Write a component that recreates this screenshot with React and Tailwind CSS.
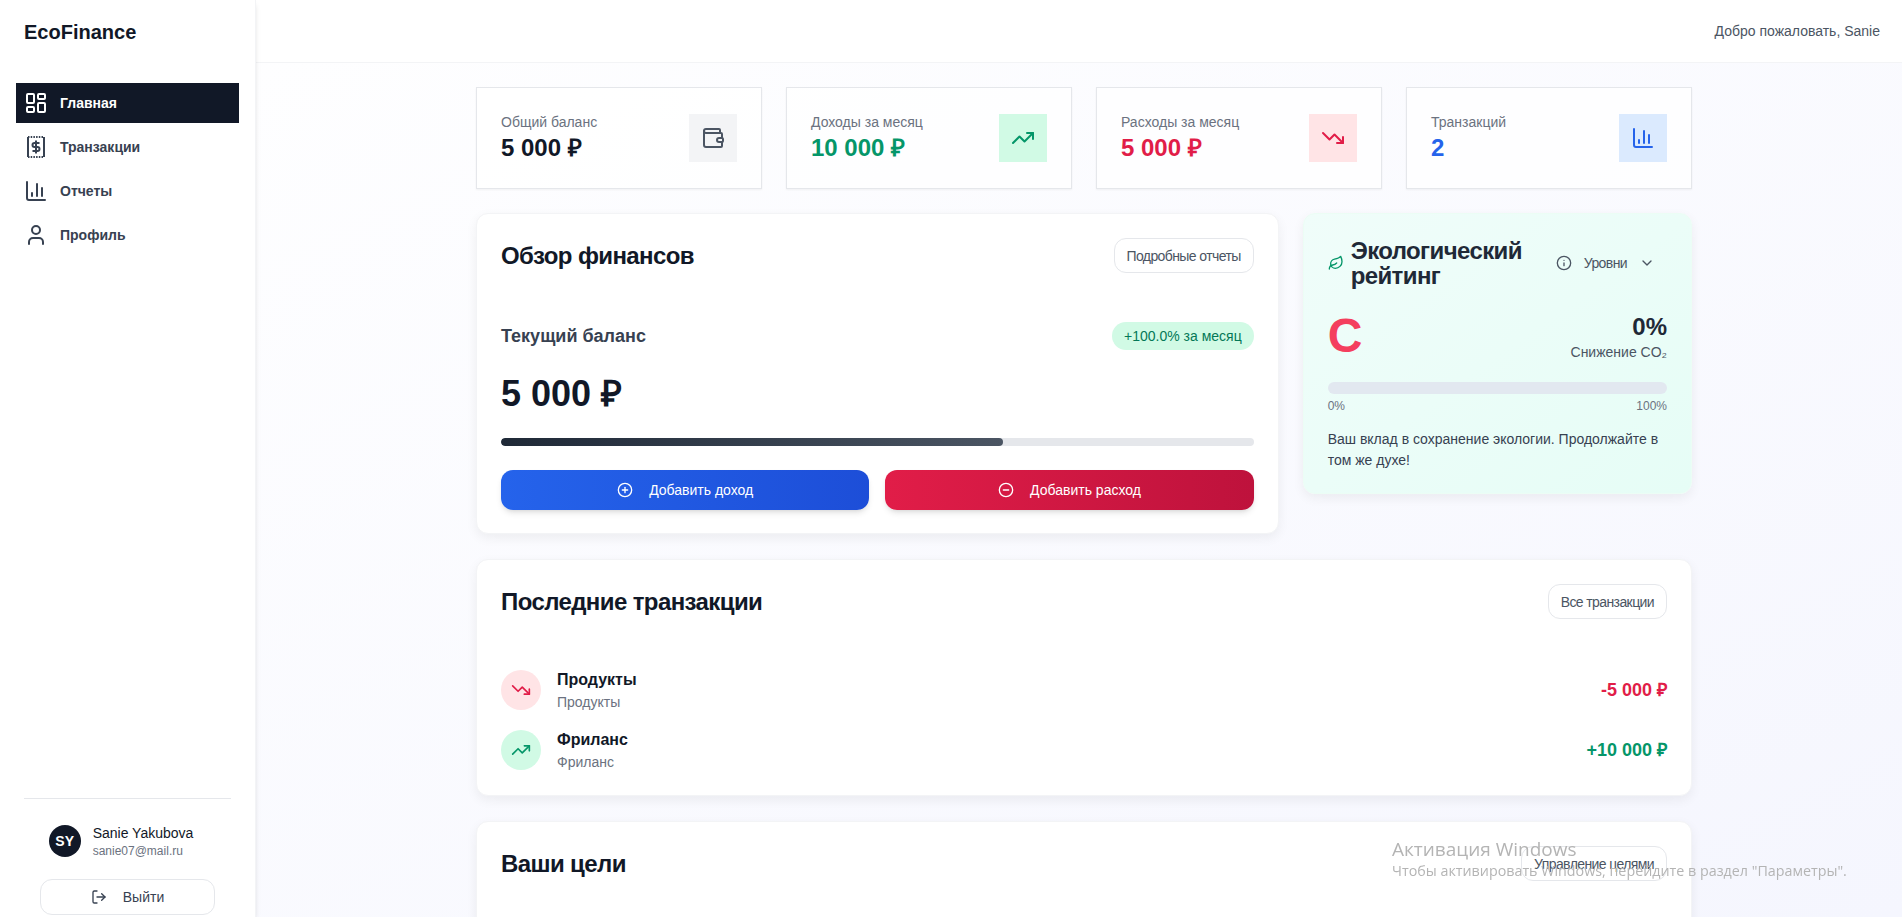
import React from 'react';
import {
  ChartColumn,
  ChevronDown,
  CircleMinus,
  CirclePlus,
  Info,
  LayoutDashboard,
  Leaf,
  LogOut,
  TrendingDown,
  TrendingUp,
  User,
  Wallet,
} from 'lucide-react';

const ReceiptIcon = ({ className }) => (
  <svg viewBox="0 0 24 24" fill="none" stroke="currentColor" strokeWidth="2" className={className}>
    <path d="M4 2v20M20 2v20" />
    <path d="M4 2h16M4 22h16" strokeDasharray="1.5 1.2" />
    <path d="M15.5 8H10.5a2 2 0 0 0 0 4h3a2 2 0 0 1 0 4H8.5M12 5.5v13" strokeLinejoin="round" />
  </svg>
);

const navItems = [
  { label: 'Главная', icon: LayoutDashboard, active: true },
  { label: 'Транзакции', icon: ReceiptIcon },
  { label: 'Отчеты', icon: ChartColumn },
  { label: 'Профиль', icon: User },
];

const stats = [
  { label: 'Общий баланс', value: '5 000 ₽', valueColor: 'text-[#111827]', icon: Wallet, box: 'bg-[#f3f4f6]', iconColor: 'text-[#4b5563]' },
  { label: 'Доходы за месяц', value: '10 000 ₽', valueColor: 'text-[#059669]', icon: TrendingUp, box: 'bg-[#d1fae5]', iconColor: 'text-[#059669]' },
  { label: 'Расходы за месяц', value: '5 000 ₽', valueColor: 'text-[#e11d48]', icon: TrendingDown, box: 'bg-[#ffe4e6]', iconColor: 'text-[#e11d48]' },
  { label: 'Транзакций', value: '2', valueColor: 'text-[#2563eb]', icon: ChartColumn, box: 'bg-[#dbeafe]', iconColor: 'text-[#2563eb]' },
];

const transactions = [
  { title: 'Продукты', amount: '-5 000 ₽', icon: TrendingDown, circle: 'bg-[#ffe4e6]', color: 'text-[#e11d48]' },
  { title: 'Фриланс', amount: '+10 000 ₽', icon: TrendingUp, circle: 'bg-[#d1fae5]', color: 'text-[#059669]' },
];

const OutlineButton = ({ children }) => (
  <button className="h-[35px] px-3 bg-white border border-gray-200 rounded-xl text-sm tracking-[-0.6px] text-[#4b5563] whitespace-nowrap">
    {children}
  </button>
);

const Card = ({ className = '', children }) => (
  <div className={`bg-white border border-gray-100 rounded-xl shadow-[0_4px_12px_rgba(0,0,0,0.06)] ${className}`}>{children}</div>
);

const Sidebar = () => (
  <aside className="w-64 h-screen shrink-0 flex flex-col bg-white border-r border-gray-100 shadow-md z-10">
    <div className="h-[63px] px-6 flex items-center">
      <span className="text-xl font-bold text-[#111827]">EcoFinance</span>
    </div>
    <nav className="px-4 pt-5 flex flex-col gap-1">
      {navItems.map((item) => {
        const Icon = item.icon;
        return (
          <a
            key={item.label}
            className={`h-10 pl-2 flex items-center gap-3 text-sm font-bold ${item.active ? 'bg-[#111827] text-white' : 'text-[#374151]'}`}
          >
            <Icon className="w-6 h-6 shrink-0" />
            {item.label}
          </a>
        );
      })}
    </nav>
    <div className="mt-auto mx-6 pt-6 pb-[2px] border-t border-gray-200 flex flex-col items-center">
      <div className="flex items-center gap-3 pr-[13px]">
        <div className="w-8 h-8 rounded-full bg-[#111827] text-white text-sm font-bold flex items-center justify-center">SY</div>
        <div>
          <div className="text-sm text-[#111827] leading-5">Sanie Yakubova</div>
          <div className="text-xs text-[#6b7280] leading-4">sanie07@mail.ru</div>
        </div>
      </div>
      <button className="mt-5 w-[175px] h-9 bg-white border border-gray-200 rounded-xl flex items-center justify-center gap-4 text-sm text-[#374151]">
        <LogOut className="w-4 h-4" />
        Выйти
      </button>
    </div>
  </aside>
);

const StatCard = ({ stat }) => {
  const Icon = stat.icon;
  return (
    <div className="h-[102px] px-6 flex items-center justify-between bg-white/70 border border-gray-200 shadow-xs">
      <div>
        <div className="text-sm text-[#6b7280] leading-5">{stat.label}</div>
        <div className={`text-2xl font-bold leading-8 ${stat.valueColor}`}>{stat.value}</div>
      </div>
      <div className={`w-12 h-12 flex items-center justify-center ${stat.box}`}>
        <Icon className={`w-6 h-6 ${stat.iconColor}`} />
      </div>
    </div>
  );
};

const Overview = () => (
  <Card className="col-span-2 h-[321px] px-6 pt-6">
    <div className="flex items-center justify-between">
      <h2 className="text-2xl font-bold tracking-tight text-[#111827]">Обзор финансов</h2>
      <OutlineButton>Подробные отчеты</OutlineButton>
    </div>
    <div className="mt-[49px] flex items-center justify-between">
      <span className="text-lg font-bold text-[#374151]">Текущий баланс</span>
      <span className="h-7 px-3 flex items-center rounded-full bg-[#d1fae5] text-[#047857] text-sm">+100.0% за месяц</span>
    </div>
    <div className="mt-6 text-4xl font-bold text-[#111827] leading-10">5 000 ₽</div>
    <div className="mt-6 h-2 rounded-full bg-[#e5e7eb] overflow-hidden">
      <div className="h-full w-2/3 rounded-full bg-gradient-to-r from-[#1f2937] to-[#4b5563]" />
    </div>
    <div className="mt-6 grid grid-cols-2 gap-4">
      <button className="h-10 rounded-xl bg-gradient-to-r from-[#2563eb] to-[#1d4ed8] text-white text-sm flex items-center justify-center gap-4 shadow-md">
        <CirclePlus className="w-4 h-4" />
        Добавить доход
      </button>
      <button className="h-10 rounded-xl bg-gradient-to-r from-[#e11d48] to-[#be123c] text-white text-sm flex items-center justify-center gap-4 shadow-md">
        <CircleMinus className="w-4 h-4" />
        Добавить расход
      </button>
    </div>
  </Card>
);

const EcoRating = () => (
  <div className="h-[281px] p-6 rounded-xl border border-[#ecfdf5] bg-gradient-to-br from-[#f0fdfa] to-[#e6fdf6] shadow-[0_4px_12px_rgba(0,0,0,0.06)]">
    <div className="flex items-center justify-between">
      <div className="flex items-center gap-[7px]">
        <Leaf className="w-4 h-4 text-[#059669]" />
        <h3 className="text-2xl font-bold tracking-tight text-[#1f2937] leading-[25px] w-[176px]">Экологический рейтинг</h3>
      </div>
      <div className="flex items-center gap-3 pr-3 text-sm tracking-[-0.6px] text-[#4b5563]">
        <Info className="w-4 h-4" />
        Уровни
        <ChevronDown className="w-4 h-4" />
      </div>
    </div>
    <div className="mt-[23px] flex items-start justify-between">
      <span className="text-5xl font-bold text-[#f43f5e] leading-[50px]">C</span>
      <div className="text-right">
        <div className="text-2xl font-bold text-[#1f2937] leading-8">0%</div>
        <div className="-mt-px text-sm text-[#4b5563] leading-5">Снижение CO₂</div>
      </div>
    </div>
    <div className="mt-5 h-3 rounded-full bg-[#e2e8f0]" />
    <div className="mt-1 flex justify-between text-xs text-[#6b7280]">
      <span>0%</span>
      <span>100%</span>
    </div>
    <p className="mt-[15px] text-sm text-[#374151] leading-[21px]">Ваш вклад в сохранение экологии. Продолжайте в том же духе!</p>
  </div>
);

const Transactions = () => (
  <Card className="col-span-3 h-[237px] px-6 pt-6">
    <div className="flex items-center justify-between">
      <h2 className="text-2xl font-bold tracking-tight text-[#111827]">Последние транзакции</h2>
      <OutlineButton>Все транзакции</OutlineButton>
    </div>
    <div className="mt-[49px] flex flex-col gap-4">
      {transactions.map((t) => {
        const Icon = t.icon;
        return (
          <div key={t.title} className="flex items-center justify-between">
            <div className="flex items-center gap-4">
              <div className={`w-10 h-10 rounded-full flex items-center justify-center ${t.circle}`}>
                <Icon className={`w-5 h-5 ${t.color}`} />
              </div>
              <div>
                <div className="text-base font-bold text-[#111827] leading-6">{t.title}</div>
                <div className="text-sm text-[#6b7280] leading-5">{t.title}</div>
              </div>
            </div>
            <span className={`text-lg font-bold ${t.color}`}>{t.amount}</span>
          </div>
        );
      })}
    </div>
  </Card>
);

const Goals = () => (
  <Card className="col-span-3 h-[300px] px-6 pt-6">
    <div className="flex items-center justify-between">
      <h2 className="text-2xl font-bold tracking-tight text-[#111827]">Ваши цели</h2>
      <OutlineButton>Управление целями</OutlineButton>
    </div>
  </Card>
);

export default function App() {
  return (
    <div className="h-screen overflow-hidden flex font-['Liberation_Sans',sans-serif] bg-gradient-to-br from-white to-[#f5f6fe]">
      <Sidebar />
      <div className="flex-1 min-w-0">
        <header className="h-[63px] pr-[22px] flex items-center justify-end bg-white border-b border-gray-100">
          <span className="text-sm text-[#4b5563]">Добро пожаловать, Sanie</span>
        </header>
        <main className="pt-6 pl-[220px] pr-[210px]">
          <div className="grid grid-cols-4 gap-6">
            {stats.map((stat) => (
              <StatCard key={stat.label} stat={stat} />
            ))}
          </div>
          <div className="mt-6 grid grid-cols-3 gap-x-6 gap-y-[25px] items-start">
            <Overview />
            <EcoRating />
            <Transactions />
            <Goals />
          </div>
        </main>
      </div>
      <div className="fixed left-[1392px] top-[837px] pointer-events-none font-['Open_Sans',sans-serif] text-[#b4b4b4]">
        <div className="text-[19px] leading-6">Активация Windows</div>
        <div className="text-[14.3px] leading-5 whitespace-nowrap">Чтобы активировать Windows, перейдите в раздел "Параметры".</div>
      </div>
    </div>
  );
}
